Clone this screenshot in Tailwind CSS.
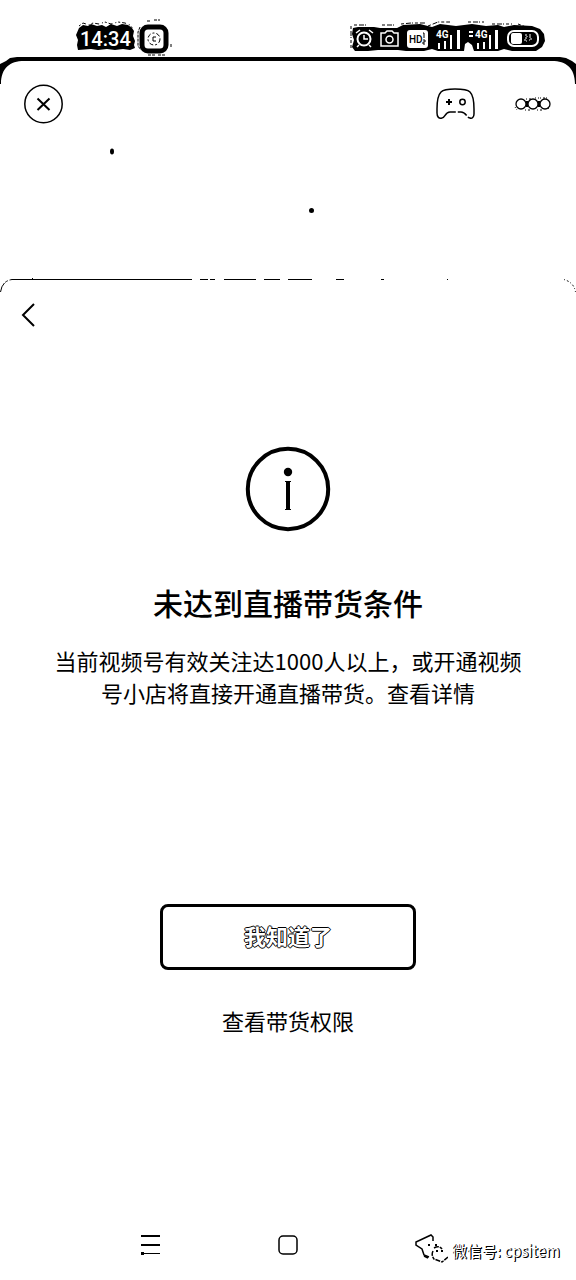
<!DOCTYPE html>
<html lang="zh-CN">
<head>
<meta charset="utf-8">
<meta name="viewport" content="width=device-width, initial-scale=1">
<title>直播带货</title>
<script src="https://cdn.jsdelivr.net/npm/@tailwindcss/browser@4"></script>
</head>
<body class="flex min-h-screen flex-col bg-white font-['Noto_Sans_CJK_SC',sans-serif] text-black">
  <header class="flex h-[57px] items-end justify-between pr-6 pl-[70px]">
    <svg class="h-[42px] w-[110px]" viewBox="0 0 110 42" role="img" aria-label="14:34">
      <path d="M9 13l4-3 5 1 3-2 6 2 5-1 4 2 5-3 6 2 5-2 6 1 4 3 2 3-1 5 2 5-1 4 1 3-5 2-7-1-8 1-8-1-9 1-7-1-13 1-1-5 1-5-2-5z"/>
      <path d="M9 11l4-3 6 2 4-2 6 1 6-2 6 2 7-2 7 1 5 2 3 4" fill="none" stroke="#000" stroke-dasharray="2 2 4 3 1 2"/>
      <text x="10" y="31" fill="#fff" class="font-[Roboto] text-[20px] font-medium">14:34</text>
      <rect x="72" y="12" width="24" height="24" rx="6" fill="#fff" stroke="#000" stroke-width="5"/>
      <path d="M77 6h4m3-1h6M70 12l-2 5v14l3 4m7 5h7m3 0h8m5-11v3" fill="none" stroke="#000" stroke-dasharray="3 1"/>
      <circle cx="84" cy="24" r="6" fill="none" stroke="#000" stroke-dasharray="4 2 2 2"/>
      <path d="M86 22h-3v4h3" fill="none" stroke="#000"/>
    </svg>
    <svg class="h-[42px] w-[212px]" viewBox="0 0 212 42" role="img" aria-label="手机状态">
      <path d="M13 13L18 12H34L40 13H57L63 10 80 9 92 12 100 9 116 11 124 10 132 9 146 11 158 10 164 12 174 10 192 11 200 14 204 19 205 26 202 32 196 36 172 36 164 34 158 36H134L132 30 128 27 125 29 124 36H98L92 34 84 36H66L58 35H38L28 36H15L12 32 14 25 12 19z"/>
      <path d="M11 11v22m3-23h14m14 0h14m5-1 10-1h14m3 3 10-4h12m18 0h16m8 2h20m6 0 8 3m2 3 2 6" fill="none" stroke="#000" stroke-dasharray="3 2 5 1 1 2"/>
      <g fill="none" stroke="#fff">
        <circle cx="24" cy="24" r="6.500" stroke-width="2"/>
        <path d="M16 18l4-3m9 0 4 3M24 20v4h4m-9 6-2 2m12-2 2 2" stroke-width="1.500"/>
        <path d="M41 18h4l2-2h5l2 2h4v13H41z" stroke-width="1.500"/>
        <circle cx="49.500" cy="24.500" r="3.500" stroke-width="1.500"/>
      </g>
      <rect x="67" y="15" width="21" height="18" rx="3" fill="#fff"/>
      <text x="69" y="28" class="font-[Roboto] text-[10px] font-medium">HD</text>
      <path d="M83 18h1v5m-1 2h2v2h-2v2h2" fill="none" stroke="#000"/>
      <g fill="#fff">
        <text x="96" y="23" class="font-[Roboto] text-[10px] font-bold">4G</text>
        <path d="M98 28h2v6h-2zM104 26h2v8h-2zM110 20h2v14h-2zM117 15h3v19h-3z"/>
        <text x="135" y="23" class="font-[Roboto] text-[10px] font-bold">4G</text>
        <path d="M137 28h2v6h-2zM143 27h2v7h-2zM149 20h2v14h-2zM155 15h3v19h-3z"/>
        <path d="M129 16h4v2h-4zM129 20h4v2h-4z"/>
      </g>
      <rect x="168" y="16" width="30" height="15" rx="6" fill="none" stroke="#fff" stroke-width="2"/>
      <rect x="171" y="18" width="11" height="11" rx="2" fill="#fff"/>
      <path d="M185 20h2v2m0 1h-2v3h2m2-6h3m-3 2h2v3h-2" fill="none" stroke="#fff" stroke-dasharray="2 1"/>
    </svg>
  </header>

  <div class="flex h-[27px] items-start" aria-hidden="true">
    <svg class="h-[27px] w-6 shrink-0" viewBox="0 0 24 27"><path d="M0 7l6-3 4-3 7-1h7v4C10 4 1 11 1 27H0z"/></svg>
    <div class="h-1 grow bg-black"></div>
    <svg class="h-[27px] w-6 shrink-0" viewBox="0 0 24 27"><path d="M24 7l-4-3-6-3-6-1H0v4c14 0 23 7 23 23h1z"/></svg>
  </div>

  <nav class="flex h-10 items-center justify-between pr-6 pl-6">
    <button type="button" aria-label="关闭">
      <svg class="size-10" viewBox="0 0 40 40" fill="none" stroke="#000">
        <circle cx="19.500" cy="20" r="18.700" stroke-width="1.500"/>
        <path d="M13.500 14.500l12 11.500m0-11.500-12 11.500" stroke-width="2"/>
      </svg>
    </button>
    <div class="flex items-center gap-9">
      <button type="button" aria-label="游戏">
        <svg class="h-8 w-11" viewBox="0 0 44 32" fill="none" stroke="#000" stroke-width="1.500">
          <path d="M3 21C3 12 4 7 7 4c3-3 8-3 14-3s12 0 15 3c3 3 4 8 4 17v5c0 3-2 5-4 4-3 0-4-6-9-6H16c-5 0-5 6-8 6-3 1-5-1-5-5z" stroke-dasharray="80 2 10 2 30 2 6 1"/>
          <path d="M12 14h6m-3-3v6" stroke-width="2"/>
          <circle cx="28.500" cy="14" r="2.700"/>
        </svg>
      </button>
      <button type="button" aria-label="更多">
        <svg class="h-5 w-[38px]" viewBox="0 0 38 20" fill="none" stroke="#000">
          <circle cx="7" cy="10" r="5" stroke-width="1.300"/><circle cx="19" cy="10" r="5" stroke-width="1.300"/><circle cx="31" cy="10" r="5" stroke-width="1.300"/>
          <path d="M13 7v6m12-6v6" stroke-width="2"/>
          <path d="M12 5h5m4-1h4m1 0h9M1 13l2 3m8 0h5m7 0h5m6-1 2-3" stroke-dasharray="1 2 2 1"/>
        </svg>
      </button>
    </div>
  </nav>

  <svg class="h-[154px] w-full" viewBox="0 0 576 154" preserveAspectRatio="none" aria-hidden="true">
    <ellipse cx="112" cy="27.500" rx="2" ry="3"/>
    <circle cx="311.500" cy="86.500" r="2.500"/>
  </svg>

  <main class="flex grow flex-col">
    <svg class="h-4 w-full" viewBox="0 0 576 16" preserveAspectRatio="none" fill="none" stroke="#000" aria-hidden="true">
      <path d="M.5 14Q2 3 12 1.500" stroke-dasharray="10 1 3 2"/>
      <path d="M12 1.500H192M200 1.500h8M210 1.500h5M224 1.500h32M264 1.500h16M288 1.500h24M336 1.500h8M381 1.500h3M447 1.500h1M32 .5h1"/>
      <path d="M564 1.500q10 3 11.500 12.500" stroke-dasharray="1 2 2 2"/>
    </svg>
    <div class="flex px-5 pt-2">
      <button type="button" aria-label="返回">
        <svg class="h-[26px] w-4" viewBox="0 0 16 26" fill="none" stroke="#000" stroke-width="2"><path d="M14 2 3 13l11 11"/></svg>
      </button>
    </div>

    <section class="flex flex-col items-center pt-[118px]">
      <svg class="size-[86px]" viewBox="0 0 86 86" aria-hidden="true">
        <circle cx="43" cy="43" r="40.200" fill="none" stroke="#000" stroke-width="4"/>
        <circle cx="43" cy="26" r="4.200"/>
        <path d="M40 35h6v1h-1v27h1v1h-6v-1h1V36h-1z"/>
      </svg>
      <h1 class="mt-12 text-center text-[30px] leading-[44px] font-medium">未达到直播带货条件</h1>
      <p class="mt-5 text-center text-[22px] leading-8">当前视频号有效关注达1000人以上，或开通视频<br>号小店将直接开通直播带货。<a href="#">查看详情</a></p>
      <button type="button" class="mt-[196px] h-[66px] w-64 rounded-lg border-[3px] border-black pb-1 text-[22px] font-bold text-white [text-shadow:1px_0_0_#000,-1px_0_0_#000,0_1px_0_#000,0_-1px_0_#000]">我知道了</button>
      <a href="#" class="mt-8 text-[22px] leading-9">查看带货权限</a>
    </section>
  </main>

  <footer class="grid h-[70px] grid-cols-[1fr_20px_1fr] items-center">
    <div class="flex justify-center">
      <button type="button" aria-label="菜单" class="ml-6">
        <svg class="size-5" viewBox="0 0 20 20" stroke="#000"><path d="M0 1h19M0 10h19" stroke-width="2"/><path d="M0 18.500h19"/><path d="M0 17h3v3H0z" stroke="none"/></svg>
      </button>
    </div>
    <button type="button" aria-label="主页">
      <svg class="size-5" viewBox="0 0 20 20" fill="none" stroke="#000" stroke-width="1.500"><rect x="1" y="1" width="18" height="18" rx="4"/></svg>
    </button>
    <div class="flex items-center justify-end gap-1 pt-2 pr-4">
      <svg class="h-8 w-9" viewBox="0 0 36 32" fill="none" stroke="#000" stroke-width="1.500" role="img" aria-label="微信">
        <path d="M21 8V4l-2-2L4 9v3l6 4 2 6 5 2"/>
        <path d="M22 15q5-3 8 1M12 23l4 2M21 18q-2 4 1 8l8 3 6-5" stroke-dasharray="5 1 3 1"/>
        <path d="M16 12h2m5 0h2m-1 6h2m3 0h2" stroke-width="2"/>
      </svg>
      <span class="pt-1 text-[15px] leading-5 whitespace-nowrap text-white [text-shadow:1px_0_0_#000,1px_1px_0_#000]">微信号: cpsitem</span>
    </div>
  </footer>
</body>
</html>
